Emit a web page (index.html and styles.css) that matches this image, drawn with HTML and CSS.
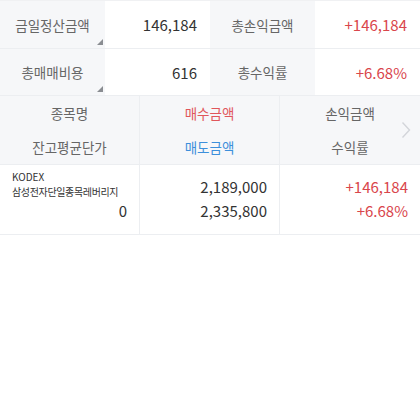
FILE: index.html
```html
<!DOCTYPE html>
<html lang="ko">
<head>
<meta charset="utf-8">
<link rel="stylesheet" href="styles.css">
</head>
<body>
<div class="summary">
  <div class="lbl tri">금일정산금액</div>
  <div class="val">146,184</div>
  <div class="lbl">총손익금액</div>
  <div class="val red">+146,184</div>
  <div class="lbl tri">총매매비용</div>
  <div class="val">616</div>
  <div class="lbl">총수익률</div>
  <div class="val red">+6.68%</div>
</div>
<div class="head">
  <div class="hc">종목명</div>
  <div class="hc red">매수금액</div>
  <div class="hc">손익금액</div>
  <div class="hc">잔고평균단가</div>
  <div class="hc blue">매도금액</div>
  <div class="hc">수익률</div>
  <svg class="chev" width="10" height="18" viewBox="0 0 10 18"><path d="M1.5 1.5 L8.5 9 L1.5 16.5" fill="none" stroke="#d3d5da" stroke-width="1.4"/></svg>
</div>
<div class="row">
  <div class="c1">
    <div class="nm">KODEX</div>
    <div class="nm ko">삼성전자단일종목레버리지</div>
    <div class="num">0</div>
  </div>
  <div class="c2">
    <div class="num">2,189,000</div>
    <div class="num">2,335,800</div>
  </div>
  <div class="c3">
    <div class="num red">+146,184</div>
    <div class="num red">+6.68%</div>
  </div>
</div>
</body>
</html>
```
FILE: styles.css
```css
* { box-sizing: border-box; }
body {
  margin: 0;
  background: #fff;
  font-family: "Noto Sans CJK KR", "Noto Sans", sans-serif;
  color: #333;
}
.summary {
  display: grid;
  grid-template-columns: 105px 105px 105px 105px;
  grid-template-rows: 48px 47px;
  border-top: 1px solid #f0f1f3;
}
.lbl {
  background: #f6f7f9;
  border-bottom: 1px solid #eceef1;
  color: #666;
  font-size: 13.5px;
  display: flex;
  align-items: center;
  justify-content: center;
  position: relative;
}
.val {
  background: #fff;
  border-bottom: 1px solid #eceef1;
  font-size: 15px;
  color: #333;
  display: flex;
  align-items: center;
  justify-content: flex-end;
  padding-right: 13px;
}
.tri::after {
  content: "";
  position: absolute;
  right: 2px;
  bottom: 3px;
  width: 0;
  height: 0;
  border-left: 6px solid transparent;
  border-bottom: 6px solid #8a8d92;
}
.red { color: #d9464c; }
.blue { color: #3c8fdb; }
.head {
  display: grid;
  grid-template-columns: 140px 140px 140px;
  grid-template-rows: 34px 34px;
  background: #f6f7f9;
  position: relative;
  border-bottom: 1px solid #eceef1;
}
.hc {
  display: flex;
  align-items: center;
  justify-content: center;
  font-size: 13.5px;
  color: #666;
}
.hc:nth-child(3n+1), .hc:nth-child(3n+2) { border-right: 1px solid #eceef1; }
.hc.red { color: #e0565b; }
.hc.blue { color: #3c8fdb; }
.chev {
  position: absolute;
  right: 9px;
  top: 25px;
}
.row {
  display: grid;
  grid-template-columns: 140px 140px 140px;
  height: 70px;
  border-bottom: 1px solid #eceef1;
}
.c1, .c2, .c3 {
  padding: 10px 12px 0 12px;
  display: flex;
  flex-direction: column;
}
.c1 { padding-top: 5px; }
.c1, .c2 { border-right: 1px solid #eceef1; }
.nm {
  font-size: 10px;
  line-height: 14.6px;
  color: #333;
}
.nm.ko { letter-spacing: -0.35px; }
.c1 .num { line-height: 23px; }
.num {
  font-size: 15px;
  line-height: 24px;
  text-align: right;
  color: #333;
}
.c3 .num.red { color: #d9464c; }
```
